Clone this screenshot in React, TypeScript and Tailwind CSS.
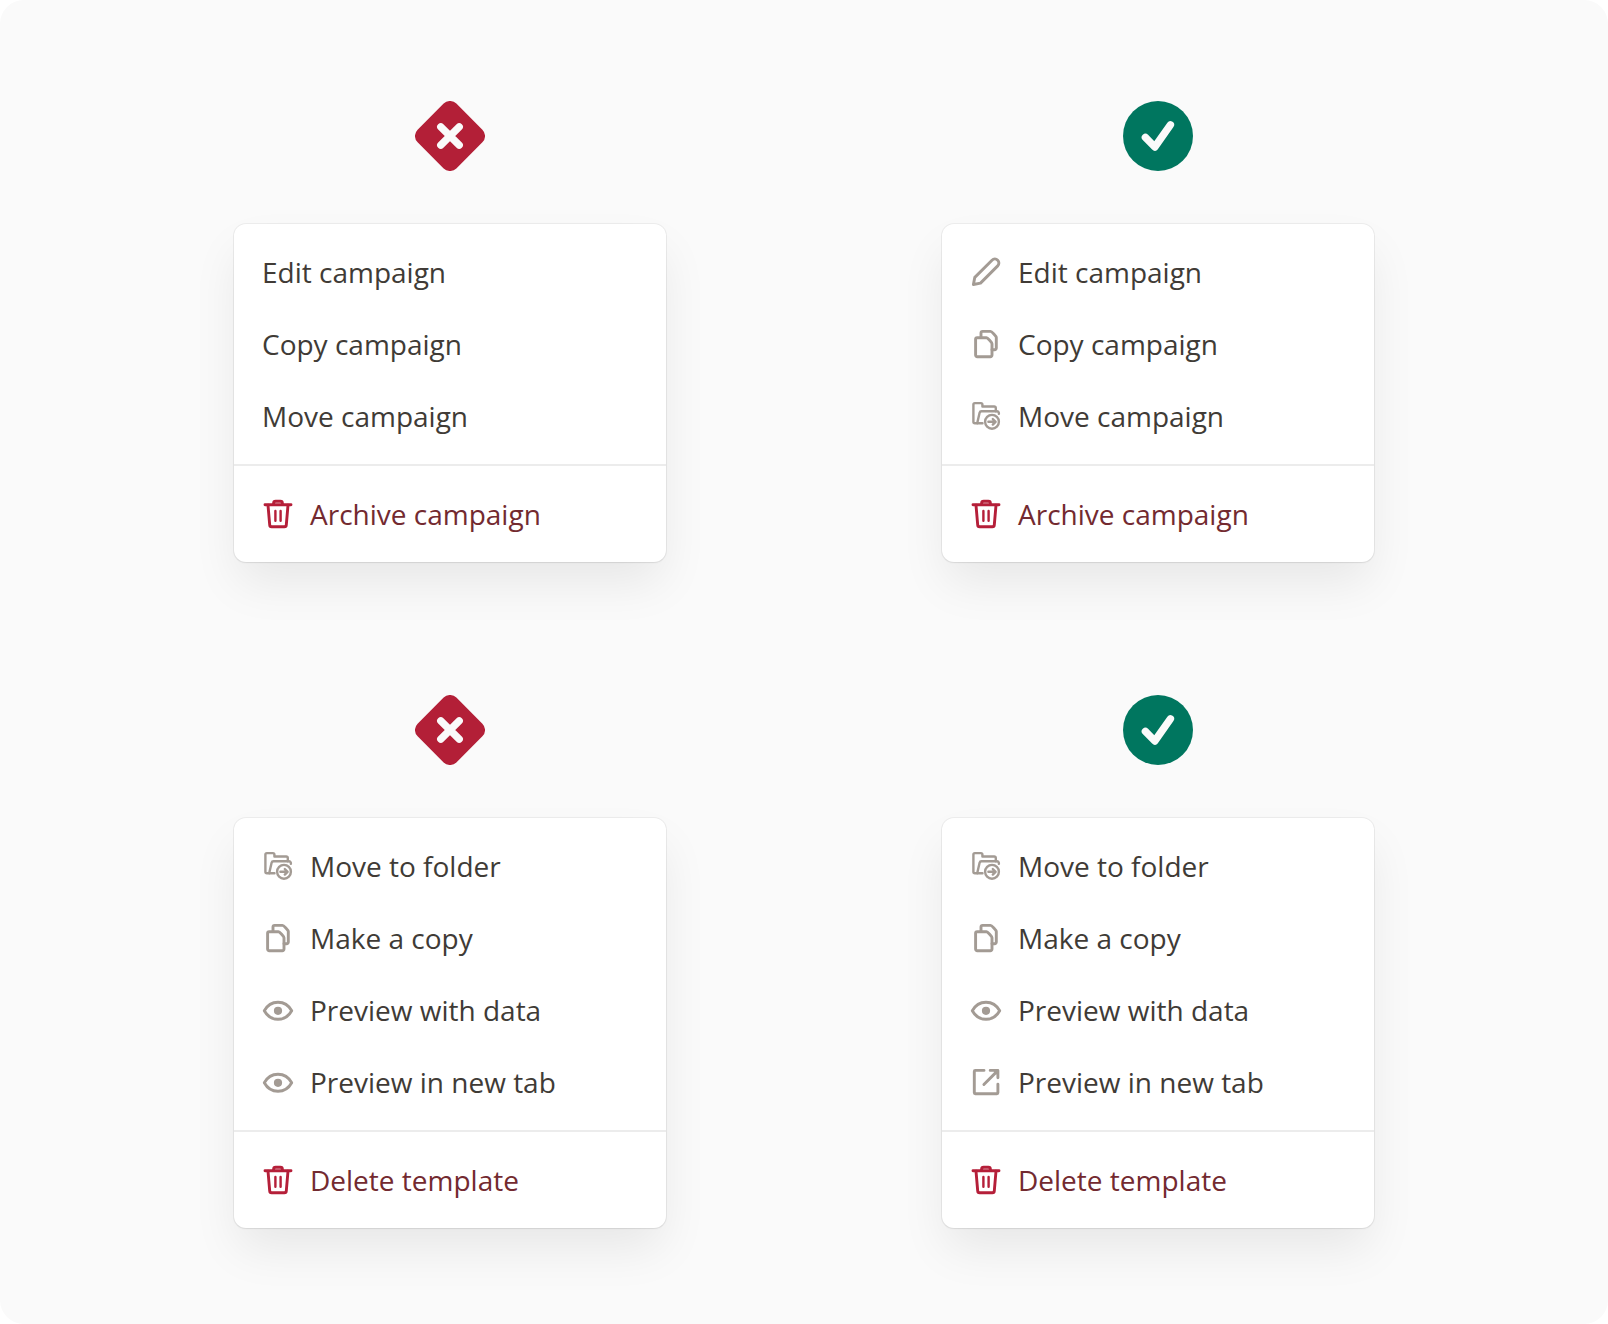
import type { ReactNode } from 'react';

type IconName = 'edit' | 'copy' | 'move' | 'eye' | 'external' | 'trash';

type MenuItem = {
  label: string;
  icon?: IconName;
};

type Example = {
  id: string;
  good: boolean;
  items: MenuItem[];
  danger: MenuItem;
};

const examples: Example[] = [
  {
    id: 'mixed-icons',
    good: false,
    items: [{ label: 'Edit campaign' }, { label: 'Copy campaign' }, { label: 'Move campaign' }],
    danger: { label: 'Archive campaign', icon: 'trash' },
  },
  {
    id: 'all-icons',
    good: true,
    items: [
      { label: 'Edit campaign', icon: 'edit' },
      { label: 'Copy campaign', icon: 'copy' },
      { label: 'Move campaign', icon: 'move' },
    ],
    danger: { label: 'Archive campaign', icon: 'trash' },
  },
  {
    id: 'repeated-icons',
    good: false,
    items: [
      { label: 'Move to folder', icon: 'move' },
      { label: 'Make a copy', icon: 'copy' },
      { label: 'Preview with data', icon: 'eye' },
      { label: 'Preview in new tab', icon: 'eye' },
    ],
    danger: { label: 'Delete template', icon: 'trash' },
  },
  {
    id: 'unique-icons',
    good: true,
    items: [
      { label: 'Move to folder', icon: 'move' },
      { label: 'Make a copy', icon: 'copy' },
      { label: 'Preview with data', icon: 'eye' },
      { label: 'Preview in new tab', icon: 'external' },
    ],
    danger: { label: 'Delete template', icon: 'trash' },
  },
];

const iconShapes: Record<IconName, ReactNode> = {
  edit: <path d="M3.4 28.5 4.8 21.4 22 4.2a4 4 0 0 1 5.7 5.7L10.5 27.1Z" />,
  copy: (
    <>
      <path d="M7.2 9.7h9.3c1 0 5.5 4.8 5.5 6v11.4a1.6 1.6 0 0 1-1.6 1.6H7.2a1.6 1.6 0 0 1-1.6-1.6V11.3a1.6 1.6 0 0 1 1.6-1.6Z" />
      <path d="M11 9.5V5a1.6 1.6 0 0 1 1.6-1.6h7.9c1.2 0 5.8 4.8 5.8 6v10.7a1.6 1.6 0 0 1-1.6 1.6H22" />
    </>
  ),
  move: (
    <g strokeWidth="2.4">
      <path d="M12.5 23.3H4.9a1.5 1.5 0 0 1-1.5-1.5V4.6a1.5 1.5 0 0 1 1.5-1.5h6a1.5 1.5 0 0 1 1.5 1.5v1.9h11.9a1.5 1.5 0 0 1 1.5 1.5v3.2" />
      <path d="M7.2 23.2 9.6 12.8a2 2 0 0 1 2-1.5h15.2c1.4 0 2.3.9 2.1 2.6" />
      <circle cx="22" cy="21.8" r="6.9" />
      <path d="M18.4 21.8h7M22.8 19l2.8 2.8-2.8 2.8" />
    </g>
  ),
  eye: (
    <>
      <path d="M2.3 16.8C5.2 11.5 10.3 8.3 16 8.3s10.8 3.2 13.7 8.5C26.8 22.1 21.7 25.3 16 25.3S5.2 22.1 2.3 16.8Z" />
      <circle cx="16" cy="16.8" r="4.1" fill="currentColor" stroke="none" />
    </>
  ),
  external: (
    <>
      <path d="M14 4.4H5.3a1 1 0 0 0-1 1v21.3a1 1 0 0 0 1 1h21.6a1 1 0 0 0 1-1v-8.6" />
      <path d="M20.2 4.4h7.7v7.4M13.9 18.5 27 5.4" />
      <path d="m23 4.6 4.8 4.8V4.6Z" fill="currentColor" stroke="none" />
    </>
  ),
  trash: (
    <>
      <path d="M3 6.8h26M11.6 6.6V5.2a2 2 0 0 1 2-2h4.8a2 2 0 0 1 2 2v1.4" />
      <path d="m6 7.2 1.7 19.7a1.9 1.9 0 0 0 1.9 1.8h12.8a1.9 1.9 0 0 0 1.9-1.8L26 7.2" />
      <path d="M13.4 13v9.8M18.6 13v9.8" strokeWidth="2.4" />
    </>
  ),
};

const Icon = ({ name }: { name: IconName }) => (
  <svg
    viewBox="0 0 32 32"
    className="size-8 shrink-0"
    fill="none"
    stroke="currentColor"
    strokeWidth="2.9"
    strokeLinecap="round"
    strokeLinejoin="round"
    aria-hidden="true"
  >
    {iconShapes[name]}
  </svg>
);

const Badge = ({ good }: { good: boolean }) => (
  <svg viewBox="0 0 70 70" className="size-[70px]" fill="none" aria-hidden="true">
    {good ? (
      <>
        <circle cx="35" cy="35" r="35" fill="#00765f" />
        <path
          d="m22.4 36.4 9.4 9.6L47.4 23.8"
          stroke="#fafafa"
          strokeWidth="7.4"
          strokeLinecap="round"
          strokeLinejoin="round"
        />
      </>
    ) : (
      <>
        <rect x="7.6" y="7.6" width="54.8" height="54.8" rx="9" fill="#b31f37" transform="rotate(45 35 35)" />
        <path d="m25.8 25.8 18.4 18.4M44.2 25.8 25.8 44.2" stroke="#fafafa" strokeWidth="7.4" strokeLinecap="round" />
      </>
    )}
  </svg>
);

const MenuButton = ({ item, danger = false }: { item: MenuItem; danger?: boolean }) => (
  <button
    type="button"
    role="menuitem"
    className={`flex h-[72px] w-full items-center gap-4 px-7 text-left ${danger ? 'text-[#732a30]' : 'text-[#403b36]'}`}
  >
    {item.icon && (
      <span className={danger ? 'text-[#b51f39]' : 'text-[#a39b94]'}>
        <Icon name={item.icon} />
      </span>
    )}
    <span>{item.label}</span>
  </button>
);

const Menu = ({ example }: { example: Example }) => (
  <div
    role="menu"
    className="w-full max-w-[432px] rounded-xl bg-white text-[28px] leading-9 shadow-[0_0_0_1px_rgba(0,0,0,0.05),0_1px_2px_rgba(0,0,0,0.06),0_24px_48px_-4px_rgba(0,0,0,0.08)]"
  >
    <div className="py-3">
      {example.items.map(item => (
        <MenuButton key={item.label} item={item} />
      ))}
    </div>
    <div className="border-t-2 border-[#ececec] py-3">
      <MenuButton item={example.danger} danger />
    </div>
  </div>
);

const App = () => {
  return (
    <main className="grid min-h-screen grid-cols-2 content-start gap-y-[133px] rounded-3xl bg-[#fafafa] px-24 pt-[101px] pb-24 font-['Open_Sans',sans-serif]">
      {examples.map(example => (
        <section key={example.id} className="flex flex-col items-center gap-[53px]">
          <Badge good={example.good} />
          <Menu example={example} />
        </section>
      ))}
    </main>
  );
};

export default App;
